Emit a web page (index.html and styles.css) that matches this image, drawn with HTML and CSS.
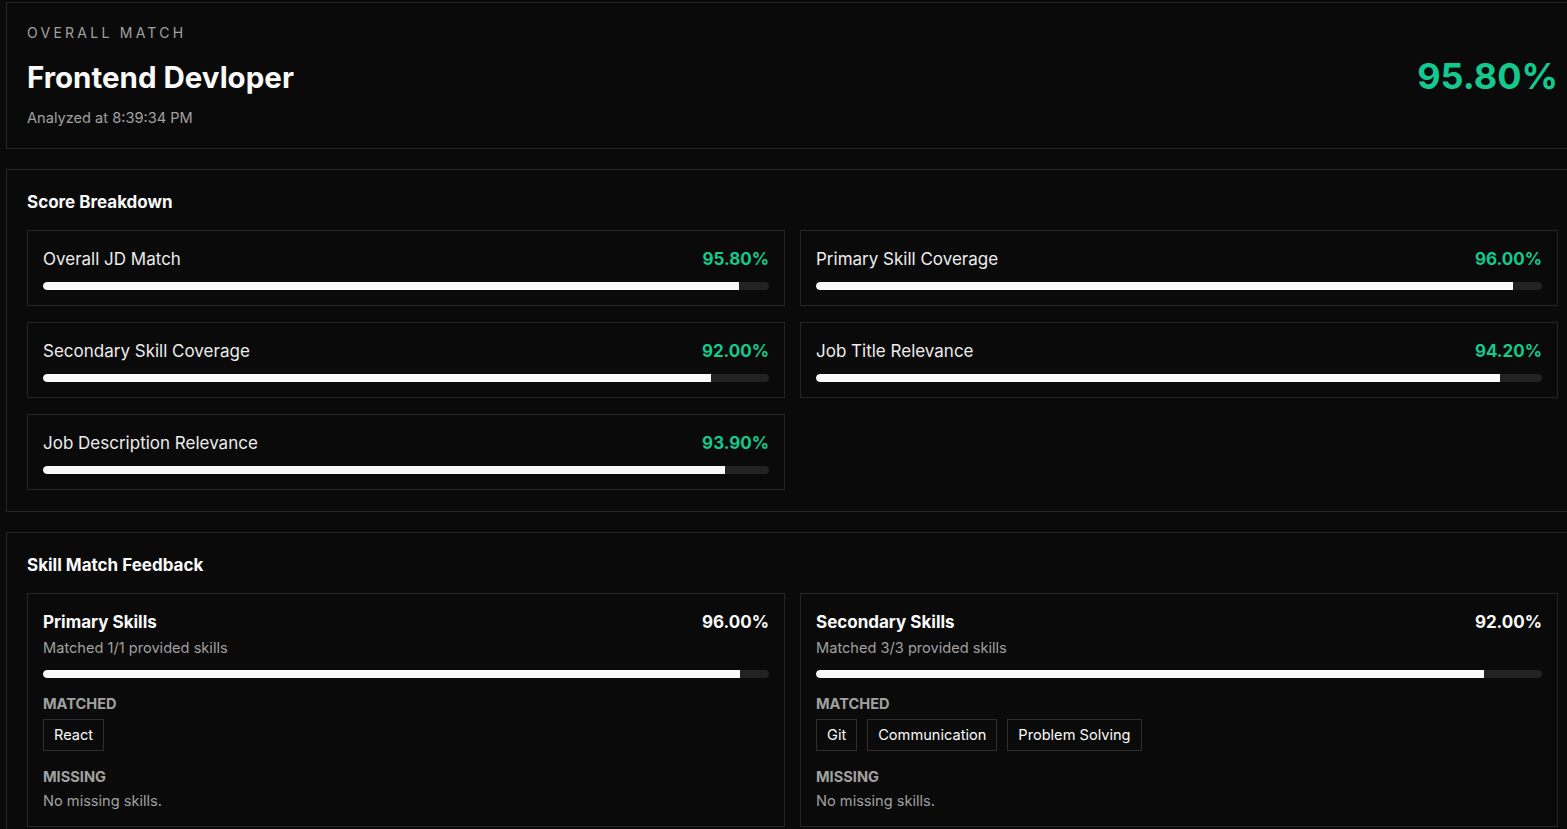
FILE: index.html
```html
<!DOCTYPE html>
<html lang="en">
<head>
<meta charset="utf-8">
<title>Match Report</title>
<link rel="stylesheet" href="styles.css">
</head>
<body>
<main class="page">
  <section class="card overall">
    <div class="overall-info">
      <div class="eyebrow">OVERALL MATCH</div>
      <h1 class="job-title">Frontend Devloper</h1>
      <div class="analyzed">Analyzed at 8:39:34 PM</div>
    </div>
    <div class="overall-score">95.80%</div>
  </section>

  <section class="card breakdown">
    <h2 class="section-title">Score Breakdown</h2>
    <div class="grid">
      <div class="metric">
        <div class="metric-head"><span class="metric-label">Overall JD Match</span><span class="metric-value">95.80%</span></div>
        <div class="track"><div class="fill" style="width:95.8%"></div></div>
      </div>
      <div class="metric">
        <div class="metric-head"><span class="metric-label">Primary Skill Coverage</span><span class="metric-value">96.00%</span></div>
        <div class="track"><div class="fill" style="width:96%"></div></div>
      </div>
      <div class="metric">
        <div class="metric-head"><span class="metric-label">Secondary Skill Coverage</span><span class="metric-value">92.00%</span></div>
        <div class="track"><div class="fill" style="width:92%"></div></div>
      </div>
      <div class="metric">
        <div class="metric-head"><span class="metric-label">Job Title Relevance</span><span class="metric-value">94.20%</span></div>
        <div class="track"><div class="fill" style="width:94.2%"></div></div>
      </div>
      <div class="metric">
        <div class="metric-head"><span class="metric-label">Job Description Relevance</span><span class="metric-value">93.90%</span></div>
        <div class="track"><div class="fill" style="width:93.9%"></div></div>
      </div>
    </div>
  </section>

  <section class="card">
    <h2 class="section-title">Skill Match Feedback</h2>
    <div class="grid">
      <div class="skill">
        <div class="skill-head"><span class="skill-name">Primary Skills</span><span class="skill-score">96.00%</span></div>
        <div class="skill-sub">Matched 1/1 provided skills</div>
        <div class="track"><div class="fill" style="width:96%"></div></div>
        <div class="group-label">MATCHED</div>
        <div class="tags"><span class="tag">React</span></div>
        <div class="group-label">MISSING</div>
        <div class="empty">No missing skills.</div>
      </div>
      <div class="skill">
        <div class="skill-head"><span class="skill-name">Secondary Skills</span><span class="skill-score">92.00%</span></div>
        <div class="skill-sub">Matched 3/3 provided skills</div>
        <div class="track"><div class="fill" style="width:92%"></div></div>
        <div class="group-label">MATCHED</div>
        <div class="tags"><span class="tag">Git</span><span class="tag">Communication</span><span class="tag">Problem Solving</span></div>
        <div class="group-label">MISSING</div>
        <div class="empty">No missing skills.</div>
      </div>
    </div>
  </section>
</main>
</body>
</html>
```

FILE: styles.css
```css
html, body {
  margin: 0;
  padding: 0;
  background: #0a0a0a;
  overflow: hidden;
}
body {
  font-family: Inter, "Liberation Sans", sans-serif;
  color: #ededed;
}
.page {
  width: 1573px;
  padding: 2px 0 0 6px;
  display: flex;
  flex-direction: column;
  gap: 20px;
}
.card {
  border: 1px solid #262626;
  background: #0a0a0a;
  padding: 20px;
}
.breakdown {
  padding-bottom: 21px;
}
.overall {
  display: flex;
  justify-content: space-between;
  align-items: center;
}
.eyebrow {
  font-size: 14px;
  line-height: 20px;
  letter-spacing: 3.25px;
  color: #a1a1a1;
}
.job-title {
  margin: 16px 0 0;
  font-size: 29.5px;
  line-height: 36px;
  font-weight: 700;
  color: #fafafa;
}
.analyzed {
  margin-top: 13px;
  font-size: 14.6px;
  line-height: 20px;
  color: #a1a1a1;
}
.overall-score {
  font-size: 36px;
  font-weight: 700;
  color: #14c98e;
}
.section-title {
  margin: 0 0 16px;
  font-size: 17px;
  line-height: 24px;
  font-weight: 700;
  color: #fafafa;
}
.grid {
  display: grid;
  grid-template-columns: 1fr 1fr;
  row-gap: 16px;
  column-gap: 15px;
}
.metric, .skill {
  border: 1px solid #262626;
  padding: 16px 15px 15px;
}
.metric-head, .skill-head {
  display: flex;
  justify-content: space-between;
  align-items: center;
}
.metric-label {
  font-size: 17px;
  line-height: 24px;
}
.metric-value {
  font-size: 17px;
  line-height: 24px;
  font-weight: 700;
  color: #14c98e;
}
.track {
  margin-top: 11px;
  height: 8px;
  border-radius: 4px;
  background: #222222;
  overflow: hidden;
}
.fill {
  height: 100%;
  background: #fafafa;
  border-radius: 4px 0 0 4px;
}
.skill-name, .skill-score {
  font-size: 17px;
  line-height: 24px;
  font-weight: 700;
  color: #fafafa;
}
.skill-sub {
  margin-top: 4px;
  font-size: 14.6px;
  line-height: 20px;
  color: #a1a1a1;
}
.skill .track {
  margin-top: 12px;
}
.group-label {
  margin-top: 16px;
  font-size: 14.6px;
  line-height: 20px;
  font-weight: 700;
  color: #a1a1a1;
}
.tags {
  margin-top: 5px;
  margin-bottom: 1px;
  display: flex;
  gap: 10px;
}
.tag {
  border: 1px solid #2e2e2e;
  padding: 5px 10px;
  font-size: 14.6px;
  line-height: 20px;
  color: #fafafa;
}
.empty {
  margin-top: 4px;
  font-size: 14.6px;
  line-height: 20px;
  color: #a1a1a1;
}
```
